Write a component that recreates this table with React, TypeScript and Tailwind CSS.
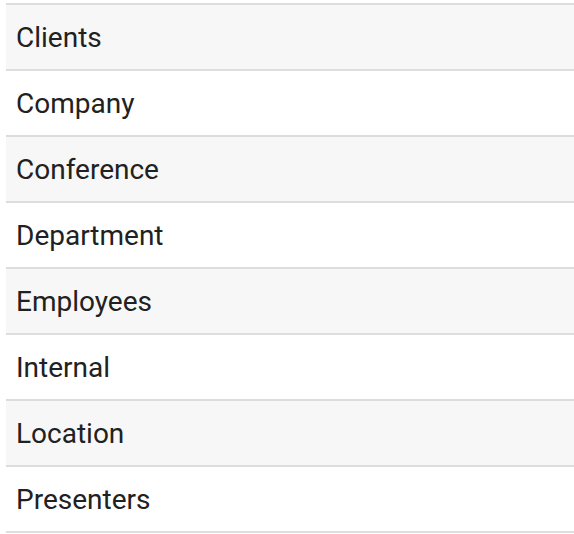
const items = [
  "Clients",
  "Company",
  "Conference",
  "Department",
  "Employees",
  "Internal",
  "Location",
  "Presenters",
];

export default function App() {
  return (
    <div className="min-h-screen bg-white pt-[3px] pl-[6px] font-['Roboto',sans-serif]">
      <ul className="border-t-2 border-[#dddddd] w-[580px]">
        {items.map((item, i) => (
          <li
            key={item}
            className={`h-[66px] flex items-center pl-[10px] pt-[2px] border-b-2 border-[#dddddd] text-[28px] text-[#212121] ${
              i % 2 === 0 ? "bg-[#f7f7f7]" : "bg-white"
            }`}
          >
            {item}
          </li>
        ))}
      </ul>
    </div>
  );
}
